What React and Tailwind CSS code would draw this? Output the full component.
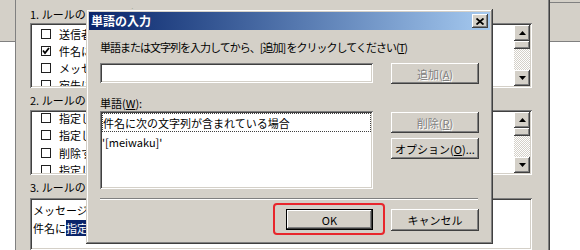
import React from "react";

const RAISED =
  "shadow-[inset_-1px_-1px_0_#404040,inset_1px_1px_0_#ffffff,inset_-2px_-2px_0_#808080,inset_2px_2px_0_#d4d0c8]";
const SUNKEN =
  "shadow-[inset_1px_1px_0_#808080,inset_-1px_-1px_0_#ffffff,inset_2px_2px_0_#404040,inset_-2px_-2px_0_#d4d0c8]";
const WINDOW =
  "shadow-[inset_-1px_-1px_0_#404040,inset_1px_1px_0_#d4d0c8,inset_-2px_-2px_0_#808080,inset_2px_2px_0_#ffffff]";

function Arrow({ up }) {
  return (
    <div className={`h-4 w-4 bg-[#d4d0c8] ${RAISED} flex items-center justify-center`}>
      <svg width="7" height="4" viewBox="0 0 7 4">
        {up ? <polygon points="3.5,0 7,4 0,4" fill="#000" /> : <polygon points="0,0 7,0 3.5,4" fill="#000" />}
      </svg>
    </div>
  );
}

function ScrollBar() {
  return (
    <div className="w-4 h-full flex flex-col shrink-0">
      <Arrow up />
      <div className={`h-2 bg-[#d4d0c8] ${RAISED}`} />
      <div className="flex-1 bg-[image:repeating-conic-gradient(#d4d0c8_0_25%,#ffffff_0_50%)] bg-size-[2px_2px]" />
      <Arrow />
    </div>
  );
}

function Check({ checked }) {
  return (
    <div className="w-[10px] h-[10px] border border-[#202020] bg-white flex items-center justify-center shrink-0">
      {checked && (
        <svg width="8" height="8" viewBox="0 0 8 8">
          <polyline points="1,3.5 3,6 7,1" fill="none" stroke="#000" strokeWidth="1.8" />
        </svg>
      )}
    </div>
  );
}

function CheckRow({ checked, children, h }) {
  return (
    <div className={`flex items-center gap-[8px] pl-[9px] ${h} whitespace-nowrap`}>
      <Check checked={checked} />
      <span>{children}</span>
    </div>
  );
}

function Btn({ children, disabled, className = "" }) {
  return (
    <div
      className={`bg-[#d4d0c8] ${RAISED} flex items-center justify-center text-[11px] ${
        disabled ? "text-[#808080] [text-shadow:1px_1px_0_#ffffff]" : "text-black"
      } ${className}`}
    >
      {children}
    </div>
  );
}

export default function App() {
  return (
    <div className="relative w-[580px] h-[250px] overflow-hidden bg-[#d4d0c8] flex font-['Noto_Sans_CJK_JP',sans-serif] text-[11px] leading-[14px] text-black">
      {/* left edge column */}
      <div className="w-[15px] shrink-0 flex flex-col">
        <div className="h-[42px] border-b border-[#808080]" />
        <div className="flex-1 bg-white" />
      </div>
      <div className="w-px bg-[#808080] shrink-0" />

      {/* background wizard */}
      <div className="w-[532px] shrink-0 pl-[14px] pr-[16px] flex flex-col">
        <div className="mt-[7px] h-[14px] whitespace-nowrap">1. ルールの条件を選択してください</div>
        <div className={`mt-[2px] h-[65px] bg-white ${SUNKEN} p-[2px] flex`}>
          <div className="flex-1 overflow-hidden">
            <CheckRow h="h-[17px]">送信者にユーザーが含まれている場合</CheckRow>
            <CheckRow h="h-[17px]" checked>件名に特定の言葉が含まれている場合</CheckRow>
            <CheckRow h="h-[17px]">メッセージ本文に特定の言葉が含まれている場合</CheckRow>
            <CheckRow h="h-[17px]">宛先にユーザーが含まれている場合</CheckRow>
          </div>
          <ScrollBar />
        </div>
        <div className="mt-[5px] h-[14px] whitespace-nowrap">2. ルールの処理を選択してください</div>
        <div className={`mt-[3px] h-[65px] bg-white ${SUNKEN} p-[2px] flex`}>
          <div className="flex-1 overflow-hidden">
            <div className="-mt-[3px]">
              <CheckRow h="h-[17.5px]">指定したフォルダに移動する</CheckRow>
              <CheckRow h="h-[17.5px]">指定したフォルダにコピーする</CheckRow>
              <CheckRow h="h-[17.5px]">削除する</CheckRow>
              <CheckRow h="h-[17.5px]">指定した人に転送する</CheckRow>
            </div>
          </div>
          <ScrollBar />
        </div>
        <div className="mt-[5px] h-[14px] whitespace-nowrap">3. ルールの説明 (下線の付いた値をクリックして編集します):</div>
        <div className={`mt-[4px] h-[70px] bg-white ${SUNKEN} pl-[3px] pt-[3px] leading-[18px] whitespace-nowrap`}>
          <div>メッセージを受信したらこのルールを適用する</div>
          <div>
            件名に<span className="bg-[#0a246a] text-white">指定の言葉</span>が含まれている場合
          </div>
        </div>
      </div>

      <div className="w-px bg-[#808080] shrink-0" />
      <div className="w-px bg-[#404040] shrink-0" />
      {/* right edge column */}
      <div className="flex-1 flex flex-col">
        <div className="h-[3px] border-b border-[#808080]" />
        <div className="h-[39px] border-b border-[#808080]" />
        <div className="flex-1 bg-white" />
      </div>

      {/* dialog */}
      <div className={`absolute left-[86px] top-[9px] w-[407px] h-[235px] bg-[#d4d0c8] ${WINDOW} p-[3px] flex flex-col`}>
        <div className="h-[18px] shrink-0 flex items-center justify-between pl-[2px] pr-[2px] bg-linear-to-r from-[#0a246a] to-[#a6caf0]">
          <span className="text-white font-bold text-[12px] leading-[14px]">単語の入力</span>
          <div className={`w-4 h-[14px] bg-[#d4d0c8] ${RAISED} flex items-center justify-center`}>
            <svg width="8" height="7" viewBox="0 0 8 7">
              <path d="M0.5 0.5 L7.5 6.5 M7.5 0.5 L0.5 6.5" stroke="#000" strokeWidth="1.8" />
            </svg>
          </div>
        </div>
        <div className="px-[11px] flex flex-col">
          <div className="mt-[10px] h-[14px] whitespace-nowrap tracking-[-1px]">
            単語または文字列を入力してから、[追加] をクリックしてください(<span className="underline">T</span>)
          </div>
          <div className="mt-[9px] flex gap-[18px] items-start">
            <div className={`w-[273px] h-[20px] bg-white ${SUNKEN}`} />
            <Btn disabled className="w-[88px] h-[21px]">
              追加(<span className="underline">A</span>)
            </Btn>
          </div>
          <div className="mt-[12px] h-[14px] whitespace-nowrap">
            単語(<span className="underline">W</span>):
          </div>
          <div className="mt-[1px] flex gap-[18px] items-start">
            <div className={`w-[273px] h-[78px] bg-white ${SUNKEN} p-[2px] whitespace-nowrap`}>
              <div className="h-[19px] border border-dotted border-[#404040] flex items-center pl-0">
                件名に次の文字列が含まれている場合
              </div>
              <div className="h-[19px] flex items-center">'[meiwaku]'</div>
            </div>
            <div className="w-[88px] mt-[1px] flex flex-col gap-[5px]">
              <Btn disabled className="h-[21px]">
                削除(<span className="underline">R</span>)
              </Btn>
              <Btn className="h-[21px]">
                オプション(<span className="underline">O</span>)...
              </Btn>
            </div>
          </div>
          <div className="mt-[9px] w-[378px] h-[2px] border-t border-[#808080] border-b border-b-white" />
          <div className="mt-[9px] flex gap-[18px] items-start">
            <div className="w-[273px] flex justify-end">
              <div className="relative w-[87px] h-[21px]">
                <div className="absolute -left-[13px] -right-[12px] -top-[6px] -bottom-[5px] border-2 border-[#e8262c] rounded-[4px]" />
                <div className="w-full h-full border border-black">
                  <Btn className="w-full h-full">OK</Btn>
                </div>
              </div>
            </div>
            <Btn className="w-[88px] h-[22px]">キャンセル</Btn>
          </div>
        </div>
      </div>
    </div>
  );
}
